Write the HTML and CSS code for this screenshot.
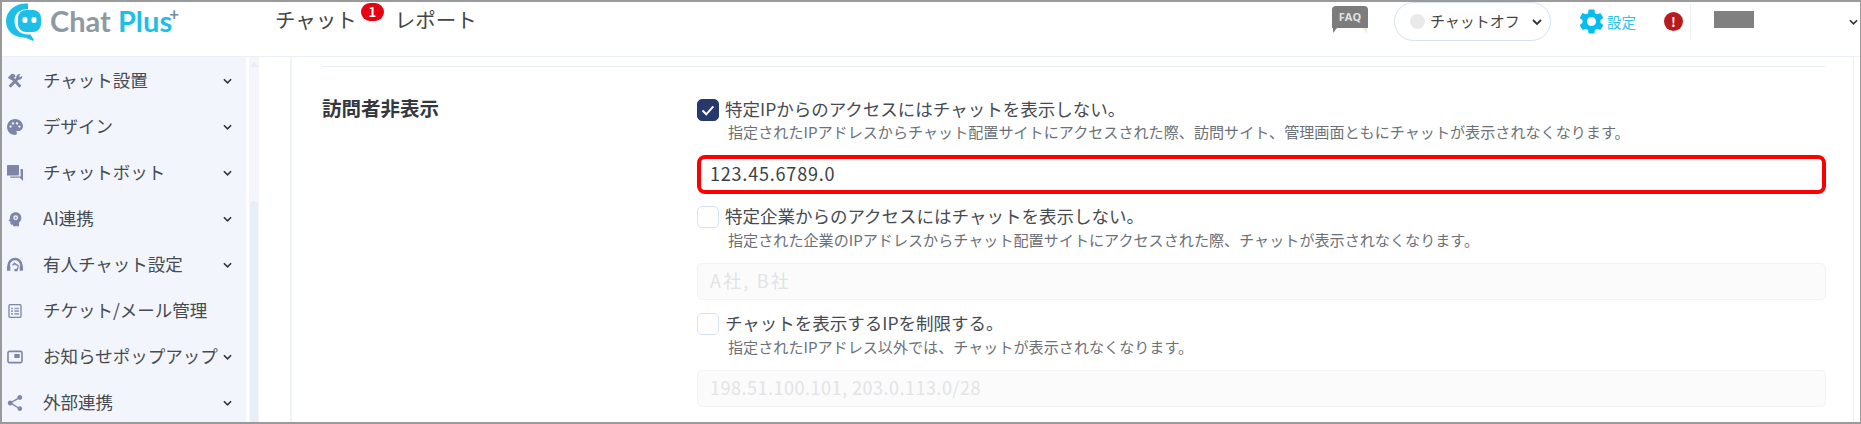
FILE: index.html
```html
<!DOCTYPE html>
<html lang="ja">
<head>
    <meta charset="UTF-8">
    <title>訪問者非表示</title>
    <link rel="stylesheet" href="styles.css">
</head>
<body>
<div class="frame">
    <header class="topbar">
        <div class="logo">
            <svg class="logo-mark" viewBox="0 0 38 38" width="38" height="38">
                <path d="M22 .5C10 -.5 0 7.500 0 18c0 9.500 7 16 17 16.500 3 .2 6 1.500 9 3 1.500.7 2.500 0 1.500-1.500l-3-4.500C14 32.500 8.500 26 8.500 18 8.500 11 13 6.500 22 6z" fill="#1dbfe8"/>
                <rect x="12" y="7" width="23" height="22" rx="8" fill="#1dbfe8"/>
                <rect x="16.500" y="14" width="5" height="6" rx="2" fill="#fff"/>
                <rect x="25.500" y="14" width="5" height="6" rx="2" fill="#fff"/>
            </svg>
            <span class="logo-text"><span class="logo-chat">Chat</span> <span class="logo-plus">Plus<sup>+</sup></span></span>
        </div>
        <nav class="topnav">
            <a class="topnav-item">チャット<span class="badge">1</span></a>
            <a class="topnav-item">レポート</a>
        </nav>
        <div class="topright">
            <div class="faq">
                <span class="faq-box">FAQ</span>
                <svg class="faq-tail" viewBox="0 0 36 6" width="36" height="6"><path d="M1 0h4L1 5z" fill="#7c7c7c"/><path d="M31 0h4v6z" fill="#ecebe2"/></svg>
            </div>
            <div class="status-pill">
                <span class="status-dot"></span>
                <span class="status-text">チャットオフ</span>
                <svg class="chev" viewBox="0 0 10 6" width="10" height="6"><path d="M1 1l4 4 4-4" fill="none" stroke="#333" stroke-width="1.800"/></svg>
            </div>
            <a class="setting">
                <svg viewBox="2 2 20 20" width="25" height="25"><path d="M19.140 12.940c.04-.3.06-.61.06-.94 0-.32-.02-.64-.07-.94l2.030-1.580c.18-.14.23-.41.12-.61l-1.920-3.320c-.12-.22-.37-.29-.59-.22l-2.390.96c-.5-.38-1.030-.7-1.620-.94l-.36-2.540c-.04-.24-.24-.41-.48-.41h-3.840c-.24 0-.43.17-.47.41l-.36 2.540c-.59.24-1.130.57-1.620.94l-2.390-.96c-.22-.08-.47 0-.59.22L2.740 8.870c-.12.21-.08.47.12.61l2.030 1.580c-.05.3-.09.63-.09.94s.02.64.07.94l-2.030 1.580c-.18.14-.23.41-.12.61l1.920 3.320c.12.22.37.29.59.22l2.390-.96c.5.38 1.030.7 1.620.94l.36 2.540c.05.24.24.41.48.41h3.840c.24 0 .44-.17.47-.41l.36-2.540c.59-.24 1.130-.56 1.620-.94l2.390.96c.22.08.47 0 .59-.22l1.920-3.320c.12-.22.07-.47-.12-.61l-2.010-1.580zM12 15.600c-1.980 0-3.600-1.620-3.600-3.600s1.620-3.600 3.600-3.600 3.600 1.620 3.600 3.600-1.620 3.600-3.600 3.600z" fill="#06bdf0"/></svg>
                <span>設定</span>
            </a>
            <span class="alert">!</span>
            <div class="user">
                <span class="user-mask"></span>
                <svg class="chev" viewBox="0 0 10 6" width="9" height="6"><path d="M1 1l4 4 4-4" fill="none" stroke="#333" stroke-width="1.800"/></svg>
            </div>
        </div>
    </header>

    <div class="body">
        <aside class="sidebar">
            <ul class="menu">
                <li class="menu-item">
                    <svg class="menu-icon" viewBox="0 0 24 24"><path d="M4 20.500L17 7M20 20.500L8 8" fill="none" stroke="#7d86a8" stroke-width="4.500"/><path d="M1 7l6-6 4 1 2 3-6 6z" fill="#7d86a8"/><path d="M14 7c-.5-3 2-6 6.500-5.500L18 4.500l2 2 3-2.500c.5 4-2.500 6.500-6 6z" fill="#7d86a8"/></svg>
                    <span class="menu-label">チャット設置</span>
                    <svg class="chev" viewBox="0 0 10 6" width="9" height="6"><path d="M1 1l4 4 4-4" fill="none" stroke="#333" stroke-width="1.800"/></svg>
                </li>
                <li class="menu-item">
                    <svg class="menu-icon" viewBox="2 2 20 20"><path d="M12 2C6.490 2 2 6.490 2 12s4.490 10 10 10c1.380 0 2.500-1.120 2.500-2.500 0-.61-.23-1.200-.64-1.670-.08-.1-.13-.21-.13-.33 0-.28.22-.5.5-.5H16c3.310 0 6-2.690 6-6 0-4.960-4.490-9-10-9zM6.500 13C5.670 13 5 12.330 5 11.500S5.670 10 6.500 10 8 10.670 8 11.500 7.330 13 6.500 13zm3-4C8.670 9 8 8.330 8 7.500S8.670 6 9.500 6s1.500.67 1.500 1.500S10.330 9 9.500 9zm5 0C13.670 9 13 8.330 13 7.500S13.670 6 14.500 6s1.500.67 1.500 1.500S15.330 9 14.500 9zm4.500 2.500c0 .83-.67 1.500-1.500 1.500S16 12.330 16 11.500s.67-1.500 1.500-1.500 1.500.67 1.500 1.500z" fill="#7d86a8"/></svg>
                    <span class="menu-label">デザイン</span>
                    <svg class="chev" viewBox="0 0 10 6" width="9" height="6"><path d="M1 1l4 4 4-4" fill="none" stroke="#333" stroke-width="1.800"/></svg>
                </li>
                <li class="menu-item">
                    <svg class="menu-icon" viewBox="2 2 20 20"><path d="M3 2h13c.55 0 1 .45 1 1v11c0 .55-.45 1-1 1H2V3c0-.55.45-1 1-1zM19 7h3v15l-4-4H6v-1.500h13z" fill="#7d86a8"/></svg>
                    <span class="menu-label">チャットボット</span>
                    <svg class="chev" viewBox="0 0 10 6" width="9" height="6"><path d="M1 1l4 4 4-4" fill="none" stroke="#333" stroke-width="1.800"/></svg>
                </li>
                <li class="menu-item">
                    <svg class="menu-icon" viewBox="0 0 24 24"><path d="M13 2c-5 0-8.500 3.500-8.500 8 0 1.500-1.500 3.500-2 4.500-.3.6.2 1 1 1h1.500v3c0 1.200.8 2 2 2h2v2.500h9v-5.500c2-1.500 3.500-4 3.500-7 0-5-3.500-8.500-8.500-8.500z" fill="#7d86a8"/><circle cx="13" cy="10" r="3.600" fill="#f2f5fb"/><circle cx="13" cy="10" r="1.500" fill="#7d86a8"/></svg>
                    <span class="menu-label">AI連携</span>
                    <svg class="chev" viewBox="0 0 10 6" width="9" height="6"><path d="M1 1l4 4 4-4" fill="none" stroke="#333" stroke-width="1.800"/></svg>
                </li>
                <li class="menu-item">
                    <svg class="menu-icon" viewBox="0 0 24 24"><path d="M2.500 18v-5.500a9.500 9.500 0 0 1 19 0V18" fill="none" stroke="#7d86a8" stroke-width="4"/><path d="M8 12.500c1.500-.5 2.500-1.500 3-3 2 2 4 3 5.500 3v2a4.500 4.500 0 0 1-2.500 4.500" fill="none" stroke="#7d86a8" stroke-width="2"/><path d="M0 14h5v6.500H0zM19 14h5v6.500h-5zM11 18h5v3.500h-5z" fill="#7d86a8"/></svg>
                    <span class="menu-label">有人チャット設定</span>
                    <svg class="chev" viewBox="0 0 10 6" width="9" height="6"><path d="M1 1l4 4 4-4" fill="none" stroke="#333" stroke-width="1.800"/></svg>
                </li>
                <li class="menu-item">
                    <svg class="menu-icon" viewBox="0 0 24 24"><rect x="3" y="2.500" width="18" height="19" rx="1.500" fill="none" stroke="#7d86a8" stroke-width="2"/><path d="M6 7h3v2.500H6zM11 7h7v2.500h-7zM6 11h3v2.500H6zM11 11h7v2.500h-7zM6 15h3v2.500H6zM11 15h7v2.500h-7z" fill="#9aa2bd"/></svg>
                    <span class="menu-label">チケット/メール管理</span>
                </li>
                <li class="menu-item">
                    <svg class="menu-icon" viewBox="0 0 24 24"><rect x="1.500" y="3.500" width="21" height="17" rx="2" fill="none" stroke="#7d86a8" stroke-width="2.400"/><rect x="11" y="7.500" width="8" height="6" fill="#7d86a8"/></svg>
                    <span class="menu-label">お知らせポップアップ</span>
                    <svg class="chev" viewBox="0 0 10 6" width="9" height="6"><path d="M1 1l4 4 4-4" fill="none" stroke="#333" stroke-width="1.800"/></svg>
                </li>
                <li class="menu-item">
                    <svg class="menu-icon" viewBox="2 2 20 20"><path d="M18 16.080c-.76 0-1.440.3-1.960.77L8.910 12.700c.05-.23.09-.46.09-.7s-.04-.47-.09-.7l7.050-4.110c.54.5 1.250.81 2.040.81 1.660 0 3-1.340 3-3s-1.340-3-3-3-3 1.340-3 3c0 .24.04.47.09.7L8.040 9.810C7.500 9.310 6.790 9 6 9c-1.660 0-3 1.340-3 3s1.340 3 3 3c.79 0 1.500-.31 2.040-.81l7.120 4.160c-.05.21-.08.43-.08.65 0 1.610 1.310 2.920 2.920 2.920s2.920-1.310 2.920-2.920-1.310-2.920-2.920-2.920z" fill="#7d86a8"/></svg>
                    <span class="menu-label">外部連携</span>
                    <svg class="chev" viewBox="0 0 10 6" width="9" height="6"><path d="M1 1l4 4 4-4" fill="none" stroke="#333" stroke-width="1.800"/></svg>
                </li>
            </ul>
            <div class="side-scroll">
                <span class="side-arrow"></span>
                <span class="side-thumb"></span>
            </div>
        </aside>
        <div class="gutter"></div>
        <main class="content">
            <hr class="rule">
            <section class="form-row">
                <h2 class="form-label">訪問者非表示</h2>
                <div class="form-fields">
                    <label class="check-row">
                        <span class="check is-on">
                            <svg viewBox="0 0 16 16" width="16" height="16"><path d="M2.500 8.500l3.800 3.800 7-8" fill="none" stroke="#fff" stroke-width="2"/></svg>
                        </span>
                        <span class="check-text">特定IPからのアクセスにはチャットを表示しない。</span>
                    </label>
                    <p class="help help-first">指定されたIPアドレスからチャット配置サイトにアクセスされた際、訪問サイト、管理画面ともにチャットが表示されなくなります。</p>
                    <div class="field field-marked">123.45.6789.0</div>
                    <label class="check-row check-second">
                        <span class="check"></span>
                        <span class="check-text">特定企業からのアクセスにはチャットを表示しない。</span>
                    </label>
                    <p class="help">指定された企業のIPアドレスからチャット配置サイトにアクセスされた際、チャットが表示されなくなります。</p>
                    <div class="field field-off field-short">A社, B社</div>
                    <label class="check-row check-third">
                        <span class="check"></span>
                        <span class="check-text">チャットを表示するIPを制限する。</span>
                    </label>
                    <p class="help">指定されたIPアドレス以外では、チャットが表示されなくなります。</p>
                    <div class="field field-off">198.51.100.101, 203.0.113.0/28</div>
                </div>
            </section>
        </main>
        <div class="right-edge"></div>
    </div>
</div>
</body>
</html>
```

FILE: styles.css
```css
html, body {
    margin: 0;
    padding: 0;
    background: #fff;
}
body {
    font-family: "Noto Sans CJK JP", "Noto Sans", sans-serif;
    color: #3c4148;
}
.frame {
    box-sizing: border-box;
    width: 1861px;
    height: 424px;
    border: 2px solid #9a9a9a;
    border-right-width: 1px;
    overflow: hidden;
    display: flex;
    flex-direction: column;
}

/* top bar */
.topbar {
    flex: none;
    height: 54px;
    border-bottom: 1px solid #e9eef8;
    display: flex;
    align-items: flex-start;
}
.logo {
    width: 273px;
    flex: none;
    display: flex;
    align-items: flex-start;
    padding-top: 1px;
    padding-left: 4px;
    box-sizing: border-box;
}
.logo-mark {
    flex: none;
}
.logo-text {
    margin-left: 6px;
    font-family: "Lato", sans-serif;
    font-weight: 700;
    font-size: 29px;
    line-height: 36px;
    white-space: nowrap;
}
.logo-chat {
    color: #8d9aa2;
}
.logo-plus {
    color: #1dbfe8;
}
.logo-plus sup {
    font-size: 17px;
    line-height: 0;
    vertical-align: 12px;
    margin-left: -3px;
    color: #6f8f9c;
}
.topnav {
    display: flex;
    gap: 38px;
}
.topnav-item {
    position: relative;
    font-size: 20.500px;
    line-height: 34px;
    color: #444;
}
.badge {
    position: absolute;
    top: 1px;
    right: -27px;
    width: 23px;
    height: 18px;
    border-radius: 9px;
    background: #e60012;
    color: #fff;
    font-size: 13px;
    font-weight: 700;
    line-height: 18px;
    text-align: center;
}
.topright {
    margin-left: auto;
    display: flex;
    align-items: flex-start;
}
.faq {
    width: 36px;
    margin-top: 4px;
    margin-right: 26px;
}
.faq-box {
    display: block;
    height: 22px;
    background: #7c7c7c;
    border-radius: 4px 4px 0 0;
    color: #e2e2e2;
    font-family: "Open Sans", sans-serif;
    font-weight: 700;
    font-size: 11px;
    line-height: 22px;
    text-align: center;
}
.faq-tail {
    display: block;
}
.status-pill {
    box-sizing: border-box;
    width: 157px;
    height: 39px;
    border: 1px solid #d5e1f5;
    border-radius: 20px;
    display: flex;
    align-items: center;
    padding-left: 15px;
}
.status-dot {
    width: 15px;
    height: 15px;
    border-radius: 50%;
    background: #e9e9e9;
    margin-right: 5px;
}
.status-text {
    font-size: 15px;
    color: #444;
    margin-right: 12px;
    margin-bottom: 2px;
    white-space: nowrap;
}
.setting {
    display: flex;
    align-items: center;
    margin-left: 28px;
    margin-top: 7px;
    color: #2cc3f0;
    font-size: 14.500px;
    line-height: 25px;
    gap: 3px;
}
.alert {
    width: 19px;
    height: 19px;
    margin-left: 28px;
    margin-top: 10px;
    border-radius: 50%;
    background: #b71c1c;
    color: #fff;
    font-size: 13px;
    font-weight: 700;
    line-height: 19px;
    text-align: center;
}
.user {
    box-sizing: border-box;
    width: 170px;
    height: 37px;
    margin-top: 1px;
    margin-left: 7px;
    border-left: 1px solid #eef1f8;
    padding-left: 23px;
    padding-right: 2px;
    display: flex;
    align-items: center;
    justify-content: space-between;
}
.user-mask {
    width: 40px;
    height: 17px;
    margin-bottom: 4px;
    background: #808080;
}

/* sidebar + main */
.body {
    flex: 1;
    min-height: 0;
    display: flex;
}
.sidebar {
    flex: none;
    display: flex;
    background: #fff;
}
.menu {
    list-style: none;
    margin: 0;
    padding: 1px 0 0;
    width: 244px;
    height: 100%;
    box-sizing: border-box;
    background: #f2f5fb;
    overflow: hidden;
}
.menu-item {
    height: 46px;
    display: flex;
    align-items: center;
    padding-left: 5px;
    padding-right: 14px;
    box-sizing: border-box;
}
.menu-icon {
    width: 16px;
    height: 16px;
    flex: none;
    margin-right: 20px;
}
.menu-label {
    font-size: 17.500px;
    color: #464b52;
    white-space: nowrap;
    flex: 1;
    margin-bottom: 4px;
}
.menu-item .chev {
    flex: none;
    margin-left: 2px;
}
.side-scroll {
    width: 10px;
    margin-left: 3px;
    background: #f4f6fb;
    display: flex;
    flex-direction: column;
    align-items: center;
    padding-top: 5px;
    box-sizing: border-box;
}
.side-arrow {
    width: 0;
    height: 0;
    border-left: 4px solid transparent;
    border-right: 4px solid transparent;
    border-bottom: 5px solid #e6ebf5;
}
.side-thumb {
    width: 8px;
    flex: 1;
    margin-top: 134px;
    background: #e9edf6;
    border-radius: 4px 4px 0 0;
}
.gutter {
    flex: none;
    width: 31px;
    border-right: 2px solid #eff3fa;
}
.content {
    flex: 1;
    min-width: 0;
    padding: 9px 0 0 30px;
}
.rule {
    height: 0;
    width: 1503px;
    margin: 0;
    border: 0;
    border-top: 1px solid #e9eef8;
}
.right-edge {
    flex: none;
    width: 6px;
    border-left: 1px solid #e9eef8;
}
.form-row {
    display: grid;
    grid-template-columns: 375px 1129px;
    padding-top: 32px;
}
.form-label {
    margin: -6px 0 0;
    font-size: 19.500px;
    font-weight: 700;
    line-height: 30px;
    color: #33383e;
}
.form-fields {
    min-width: 0;
}
.check-row {
    display: flex;
    align-items: center;
    height: 22px;
}
.check {
    box-sizing: border-box;
    width: 22px;
    height: 22px;
    border: 1px solid #d5e1f5;
    border-radius: 5px;
    background: #fff;
    margin-right: 6px;
    flex: none;
    display: flex;
    align-items: center;
    justify-content: center;
}
.check.is-on {
    background: #27396b;
    border-color: #27396b;
}
.check-text {
    font-size: 17.500px;
    color: #464b52;
    white-space: nowrap;
    margin-bottom: 4px;
}
.help {
    margin: 0 0 0 31px;
    padding-bottom: 2px;
    font-size: 15.100px;
    line-height: 22px;
    color: #6c7178;
    white-space: nowrap;
}
.help-first {
    line-height: 20px;
}
.field {
    box-sizing: border-box;
    height: 37px;
    margin-top: 11px;
    padding-left: 12px;
    border: 1px solid #f1f3f6;
    border-radius: 5px;
    background: #fbfbfc;
    font-size: 18px;
    line-height: 33px;
    color: #e2e3e5;
}
.field-off {
    letter-spacing: .5px;
}
.field-short {
    letter-spacing: 2.200px;
}
.field-marked {
    height: 39px;
    margin-top: 12px;
    padding-left: 9px;
    border: 4px solid #ff0000;
    border-radius: 8px;
    background: #fff;
    line-height: 28px;
    letter-spacing: .8px;
    color: #3c4148;
}
.check-second {
    margin-top: 12px;
}
.check-third {
    margin-top: 13px;
}
```
